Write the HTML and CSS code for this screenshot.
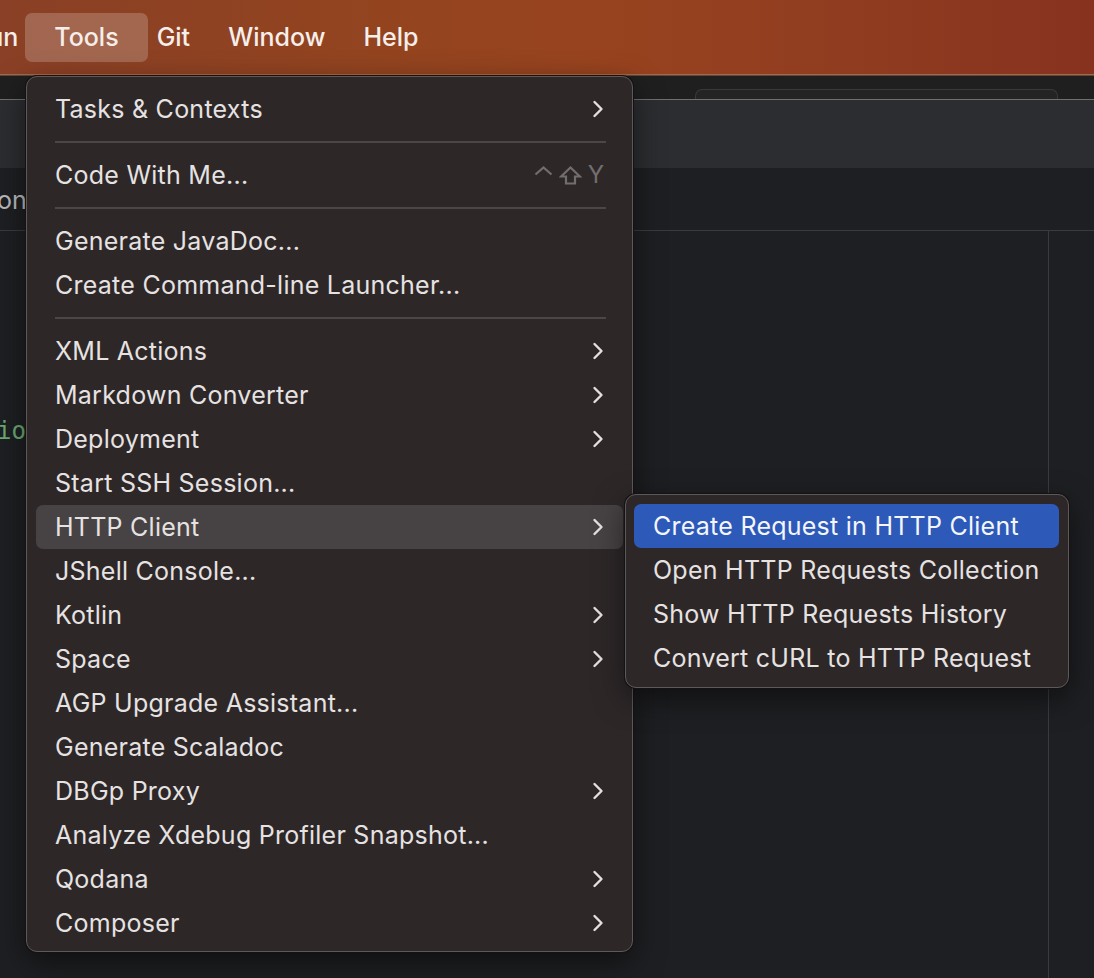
FILE: index.html
```html
<!DOCTYPE html>
<html lang="en">
<head>
<meta charset="utf-8">
<title>Tools menu</title>
<link rel="stylesheet" href="styles.css">
</head>
<body>
<div class="ide">
  <header class="menubar">
    <span class="mb-item mb-first">Run</span>
    <span class="mb-item mb-active">Tools</span>
    <span class="mb-item">Git</span>
    <span class="mb-item">Window</span>
    <span class="mb-item">Help</span>
  </header>
  <div class="toolbar"><div class="tab-outline"></div></div>
  <div class="tabbar"></div>
  <div class="crumbs"><span class="crumb-text">ont</span></div>
  <div class="editor">
    <div class="code"><span class="code-green">io</span></div>
    <div class="gutter"></div>
  </div>
</div>

<div class="menu menu-main">
  <div class="item"><span class="label">Tasks &amp; Contexts</span><svg class="chev" width="12" height="18" viewBox="0 0 12 18"><path d="M2.5 2 L9.5 9 L2.5 16"/></svg></div>
  <div class="sep"></div>
  <div class="item"><span class="label">Code With Me...</span>
    <span class="shortcut">
      <svg class="sc-caret" width="19" height="10" viewBox="0 0 19 10"><path d="M1.5 8.5 L9.5 1.5 L17.5 8.5"/></svg>
      <svg class="sc-shift" width="23" height="19" viewBox="0 0 23 19"><path d="M11.5 1.5 L21 10.5 L16 10.5 L16 17.5 L7 17.5 L7 10.5 L2 10.5 Z"/></svg>
      <span class="sc-key">Y</span>
    </span>
  </div>
  <div class="sep"></div>
  <div class="item"><span class="label">Generate JavaDoc...</span></div>
  <div class="item"><span class="label">Create Command-line Launcher...</span></div>
  <div class="sep"></div>
  <div class="item"><span class="label">XML Actions</span><svg class="chev" width="12" height="18" viewBox="0 0 12 18"><path d="M2.5 2 L9.5 9 L2.5 16"/></svg></div>
  <div class="item"><span class="label">Markdown Converter</span><svg class="chev" width="12" height="18" viewBox="0 0 12 18"><path d="M2.5 2 L9.5 9 L2.5 16"/></svg></div>
  <div class="item"><span class="label">Deployment</span><svg class="chev" width="12" height="18" viewBox="0 0 12 18"><path d="M2.5 2 L9.5 9 L2.5 16"/></svg></div>
  <div class="item"><span class="label">Start SSH Session...</span></div>
  <div class="item item-open"><span class="label">HTTP Client</span><svg class="chev" width="12" height="18" viewBox="0 0 12 18"><path d="M2.5 2 L9.5 9 L2.5 16"/></svg></div>
  <div class="item"><span class="label">JShell Console...</span></div>
  <div class="item"><span class="label">Kotlin</span><svg class="chev" width="12" height="18" viewBox="0 0 12 18"><path d="M2.5 2 L9.5 9 L2.5 16"/></svg></div>
  <div class="item"><span class="label">Space</span><svg class="chev" width="12" height="18" viewBox="0 0 12 18"><path d="M2.5 2 L9.5 9 L2.5 16"/></svg></div>
  <div class="item"><span class="label">AGP Upgrade Assistant...</span></div>
  <div class="item"><span class="label">Generate Scaladoc</span></div>
  <div class="item"><span class="label">DBGp Proxy</span><svg class="chev" width="12" height="18" viewBox="0 0 12 18"><path d="M2.5 2 L9.5 9 L2.5 16"/></svg></div>
  <div class="item"><span class="label">Analyze Xdebug Profiler Snapshot...</span></div>
  <div class="item"><span class="label">Qodana</span><svg class="chev" width="12" height="18" viewBox="0 0 12 18"><path d="M2.5 2 L9.5 9 L2.5 16"/></svg></div>
  <div class="item"><span class="label">Composer</span><svg class="chev" width="12" height="18" viewBox="0 0 12 18"><path d="M2.5 2 L9.5 9 L2.5 16"/></svg></div>
</div>

<div class="menu menu-sub">
  <div class="item item-selected"><span class="label">Create Request in HTTP Client</span></div>
  <div class="item"><span class="label">Open HTTP Requests Collection</span></div>
  <div class="item"><span class="label">Show HTTP Requests History</span></div>
  <div class="item"><span class="label">Convert cURL to HTTP Request</span></div>
</div>
</body>
</html>
```

FILE: styles.css
```css
* { box-sizing: border-box; }
html, body { margin: 0; padding: 0; }
body {
  width: 1094px;
  height: 978px;
  overflow: hidden;
  background: #1e1f22;
  font-family: Inter, "Noto Sans", "Liberation Sans", sans-serif;
  position: relative;
}

.ide {
  display: flex;
  flex-direction: column;
  height: 978px;
}

/* macOS menu bar */
.menubar {
  height: 75px;
  flex: none;
  display: flex;
  align-items: center;
  background: linear-gradient(90deg, #8a4026 0%, #93441f 35%, #98431f 55%, #8f3b20 80%, #86321f 100%);
  border-bottom: 1px solid #b5643a;
  color: #f6eeea;
  font-size: 25px;
  font-weight: 500;
  white-space: nowrap;
}
.mb-item {
  padding: 0 19px;
  height: 49px;
  line-height: 49px;
  border-radius: 7px;
}
.mb-first { padding-left: 0; padding-right: 17px; margin-left: -28px; }
.mb-active {
  padding: 0 29px;
  margin: 0 -10px;
  background: rgba(255, 255, 255, 0.2);
}

.toolbar {
  height: 25px;
  flex: none;
  background: #1f1f1f;
  border-top: 1px solid #4d4d4d;
  border-bottom: 1px solid #6f6f6f;
  display: flex;
  align-items: flex-end;
  padding-left: 695px;
}
.tab-outline {
  width: 363px;
  height: 10px;
  border: 1px solid #393939;
  border-bottom: none;
  border-radius: 7px 7px 0 0;
  background: #242424;
}

.tabbar {
  height: 68px;
  flex: none;
  background: #2b2d30;
}

.crumbs {
  height: 63px;
  flex: none;
  background: #1e1f22;
  border-bottom: 1px solid #393b40;
  display: flex;
  align-items: center;
  padding-top: 2px;
}
.crumb-text {
  color: #b9babd;
  font-size: 25px;
  margin-left: -3px;
}

.editor {
  flex: 1;
  display: flex;
}
.code {
  flex: 1;
  padding-top: 186px;
}
.code-green {
  font-family: "DejaVu Sans Mono", "Liberation Mono", monospace;
  color: #6aab73;
  font-size: 24px;
  margin-left: -3px;
}
.gutter {
  width: 46px;
  border-left: 1px solid #393b40;
}

/* popup menus */
.menu {
  position: absolute;
  background: #2d2728;
  border: 1px solid #5d5859;
  border-radius: 11px;
  box-shadow: 0 0 0 1px #141212, 0 10px 30px rgba(0, 0, 0, 0.5);
  color: #e6e2e2;
  font-size: 25px;
  letter-spacing: 0.25px;
}
.menu-main {
  left: 26px;
  top: 76px;
  width: 607px;
  height: 876px;
  padding: 10px 9px 6px 9px;
}
.menu-sub {
  left: 625px;
  top: 494px;
  width: 444px;
  height: 194px;
  padding: 9px 9px 6px 8px;
}
.item {
  height: 44px;
  display: flex;
  align-items: center;
  padding: 0 19px;
  border-radius: 7px;
}
.label { flex: 1; white-space: nowrap; }
.item-open { background: #474243; }
.item-selected { background: #2d59b9; color: #f4f6fb; }

.chev {
  fill: none;
  stroke: #e4e0e0;
  stroke-width: 2.4;
  stroke-linecap: round;
  stroke-linejoin: round;
}

.sep {
  height: 2px;
  margin: 10px 17px 10px 19px;
  background: #4b4647;
}

.shortcut {
  display: flex;
  align-items: center;
  gap: 6px;
  color: #736e6e;
}
.sc-caret, .sc-shift {
  fill: none;
  stroke: #736e6e;
  stroke-width: 2.2;
  stroke-linejoin: miter;
}
.sc-caret { margin-top: -8px; }
.sc-key { font-size: 24px; line-height: 1; letter-spacing: 0; }
```
